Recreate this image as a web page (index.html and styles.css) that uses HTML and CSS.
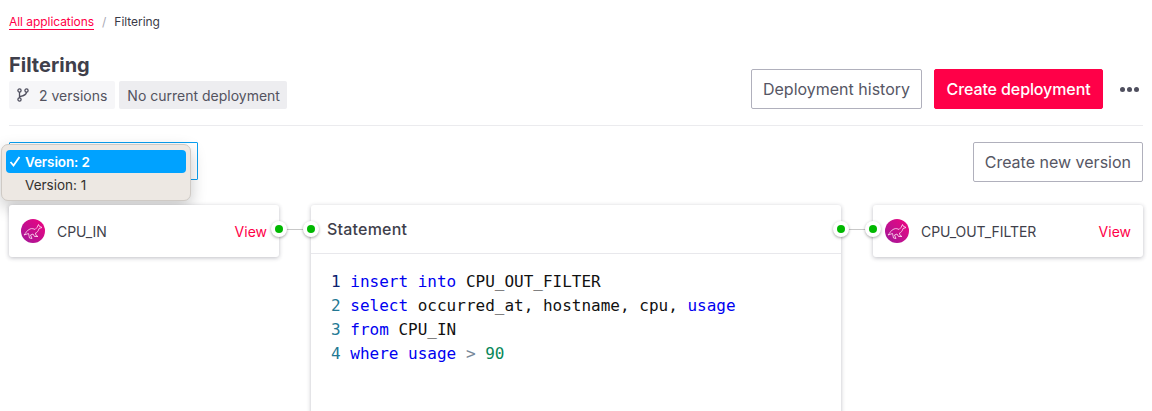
FILE: index.html
```html
<!DOCTYPE html>
<html lang="en">
<head>
<meta charset="utf-8">
<title>Filtering</title>
<link rel="stylesheet" href="styles.css">
</head>
<body>
<div class="page">
  <nav class="crumbs"><a class="crumb-link">All applications</a><span class="crumb-sep">/</span><span class="crumb-current">Filtering</span></nav>
  <header class="head">
    <div class="head-left">
      <h1 class="title">Filtering</h1>
      <div class="badges">
        <span class="badge badge-light">
          <svg class="branch" width="12" height="14" viewBox="0 0 12 14" fill="none" stroke="#4f4f5e" stroke-width="1.3"><circle cx="2.5" cy="2.5" r="1.6"/><circle cx="2.5" cy="11.5" r="1.6"/><circle cx="9.5" cy="2.5" r="1.6"/><path d="M2.5 4.1v5.8M9.5 4.1c0 2.6-2 3.4-7 4.6"/></svg>
          2 versions</span>
        <span class="badge badge-dark">No current deployment</span>
      </div>
    </div>
    <div class="head-actions">
      <button class="btn">Deployment history</button>
      <button class="btn btn-primary">Create deployment</button>
      <span class="more"><i></i><i></i><i></i></span>
    </div>
  </header>
  <div class="toolbar">
    <div class="select-box"></div>
    <button class="btn">Create new version</button>
    <ul class="menu">
      <li class="menu-item menu-selected"><svg class="check" width="12" height="11" viewBox="0 0 12 11" fill="none" stroke="#fff" stroke-width="1.8"><path d="M1.500 6l3 3.500L10.500 1"/></svg>Version: 2</li>
      <li class="menu-item">Version: 1</li>
    </ul>
  </div>
  <section class="flow">
    <article class="node">
      <svg class="logo" width="24" height="24" viewBox="0 0 24 24"><defs><linearGradient id="g1" x1="0" y1="1" x2="1" y2="0"><stop offset="0" stop-color="#a0189a"/><stop offset="1" stop-color="#f0047f"/></linearGradient></defs><circle cx="12" cy="12" r="12" fill="url(#g1)"/><path d="M3 16C5 14 6 11 9 10C11 9 13 10 14 10.500L16 8.500L17.500 5.500L18 7L21 8.500L18 9.500C17.500 12 16 13.500 14.500 14L15 16.500L17 17.500L13.500 17.500L12 15L9.500 16L11 19.500L8.500 19L7.500 14.500L3 16Z" fill="none" stroke="#ffe3f3" stroke-width=".8"/></svg>
      <span class="node-name">CPU_IN</span>
      <a class="view">View</a>
      <span class="port port-right"></span>
      <span class="wire"></span>
    </article>
    <article class="statement">
      <span class="port port-left"></span>
      <span class="port port-right"></span>
      <span class="wire"></span>
      <h2 class="statement-title">Statement</h2>
      <pre class="code"><span class="ln1">1</span> <span class="kw">insert into</span> CPU_OUT_FILTER
<span class="ln">2</span> <span class="kw">select</span> occurred_at, hostname, cpu, <span class="kw">usage</span>
<span class="ln">3</span> <span class="kw">from</span> CPU_IN
<span class="ln">4</span> <span class="kw">where usage</span> <span class="op">&gt;</span> <span class="num">90</span></pre>
    </article>
    <article class="node">
      <span class="port port-left"></span>
      <svg class="logo" width="24" height="24" viewBox="0 0 24 24"><defs><linearGradient id="g2" x1="0" y1="1" x2="1" y2="0"><stop offset="0" stop-color="#a0189a"/><stop offset="1" stop-color="#f0047f"/></linearGradient></defs><circle cx="12" cy="12" r="12" fill="url(#g2)"/><path d="M3 16C5 14 6 11 9 10C11 9 13 10 14 10.500L16 8.500L17.500 5.500L18 7L21 8.500L18 9.500C17.500 12 16 13.500 14.500 14L15 16.500L17 17.500L13.500 17.500L12 15L9.500 16L11 19.500L8.500 19L7.500 14.500L3 16Z" fill="none" stroke="#ffe3f3" stroke-width=".8"/></svg>
      <span class="node-name">CPU_OUT_FILTER</span>
      <a class="view">View</a>
    </article>
  </section>
</div>
</body>
</html>
```
FILE: styles.css
```css
* { box-sizing: border-box; }
html, body { margin: 0; height: 411px; overflow: hidden; background: #fff; }
body { font-family: Inter, "Liberation Sans", sans-serif; color: #3a3a46; }
.page { padding: 0 9px; height: 411px; overflow: hidden; }

.crumbs { display: flex; align-items: center; height: 16px; margin-top: 14px; font-size: 12px; line-height: 16px; letter-spacing: -.05px; }
.crumb-link { color: #ff0048; border-bottom: 1px solid #ff0048; line-height: 14px; height: 15px; }
.crumb-sep { color: #a8a8b4; margin: 0 8px; }
.crumb-current { color: #3a3a46; }

.head { display: flex; justify-content: space-between; align-items: flex-end; margin-top: 23px; padding-bottom: 16px; border-bottom: 1px solid #ebebee; }
.title { margin: 0 0 3px; font-size: 20px; line-height: 25px; font-weight: 700; color: #3f3f4b; }
.badges { display: flex; gap: 4px; }
.badge { display: flex; align-items: center; height: 28px; padding: 0 8px; font-size: 14px; color: #53535f; border-radius: 2px; }
.badge-light { background: #f6f6f8; gap: 10px; }
.badge-dark { background: #ededf0; padding-right: 7px; }

.head-actions { display: flex; align-items: center; }
.btn { height: 40px; padding: 0 11px; font: 400 16px Inter, "Liberation Sans", sans-serif; color: #565664; background: #fff; border: 1px solid #b0b0bc; border-radius: 2px; }
.btn-primary { margin-left: 12px; padding: 0 11.5px; background: #ff0048; border-color: #ff0048; color: #fff; font-weight: 500; letter-spacing: -.1px; }
.more { display: flex; gap: 2px; margin: 0 4px 0 17px; }
.more i { width: 5px; height: 5px; border-radius: 50%; background: #4f4f5e; }

.toolbar { position: relative; display: flex; justify-content: space-between; align-items: flex-start; margin-top: 16px; height: 63px; }
.select-box { width: 189px; height: 38px; border: 1px solid #0a9ff0; border-radius: 1px; }
.menu { position: absolute; left: -8px; top: 2px; width: 190px; height: 57px; margin: 0; padding: 5px 4px; list-style: none; background: #ede8e3; border: 1px solid #cfcac5; border-radius: 7px; box-shadow: 0 6px 16px rgba(0, 0, 0, .22); font-size: 13.5px; }
.menu-item { height: 23px; line-height: 24px; padding-left: 19px; position: relative; color: #33312f; }
.menu-selected { background: #00a2ff; color: #fff; border-radius: 4px; font-weight: 600; letter-spacing: -.1px; }
.check { position: absolute; left: 3px; top: 6px; }

.flow { display: flex; gap: 32px; align-items: flex-start; }
.node { position: relative; display: flex; align-items: center; flex: none; width: 270px; height: 52px; padding: 0 12px; border-radius: 3px; background: #fff; box-shadow: 0 1px 4px rgba(40, 40, 60, .3); font-size: 14px; }
.logo { flex: none; }
.node-name { margin-left: 12px; flex: 1; color: #3f3f4b; font-size: 14px; letter-spacing: -.05px; }
.view { color: #ff0048; font-size: 14px; }

.statement { position: relative; flex: none; width: 530px; height: 260px; border-radius: 3px; background: #fff; box-shadow: 0 1px 4px rgba(40, 40, 60, .3); }
.statement-title { margin: 0; height: 49px; padding-left: 16px; font-size: 16px; line-height: 48px; font-weight: 500; letter-spacing: .2px; color: #3f3f4b; border-bottom: 1px solid #e8e8ec; }
.code { margin: 16px 0 0 20px; font-family: "DejaVu Sans Mono", monospace; font-size: 16px; line-height: 24px; color: #111; }
.ln { color: #237893; }
.ln1 { color: #0b216f; }
.kw { color: #0000f0; }
.op { color: #778899; }
.num { color: #09885a; }

.port { position: absolute; top: 16px; width: 16px; height: 16px; border-radius: 50%; background: #fff; box-shadow: 0 1px 3px rgba(0, 0, 0, .35); z-index: 2; }
.port::after { content: ""; position: absolute; left: 4px; top: 4px; width: 8px; height: 8px; border-radius: 50%; background: #00b800; }
.port-right { right: -8px; }
.port-left { left: -8px; }
.wire { position: absolute; top: 24px; right: -32px; width: 32px; height: 1px; background: #c8c8c8; }
```
